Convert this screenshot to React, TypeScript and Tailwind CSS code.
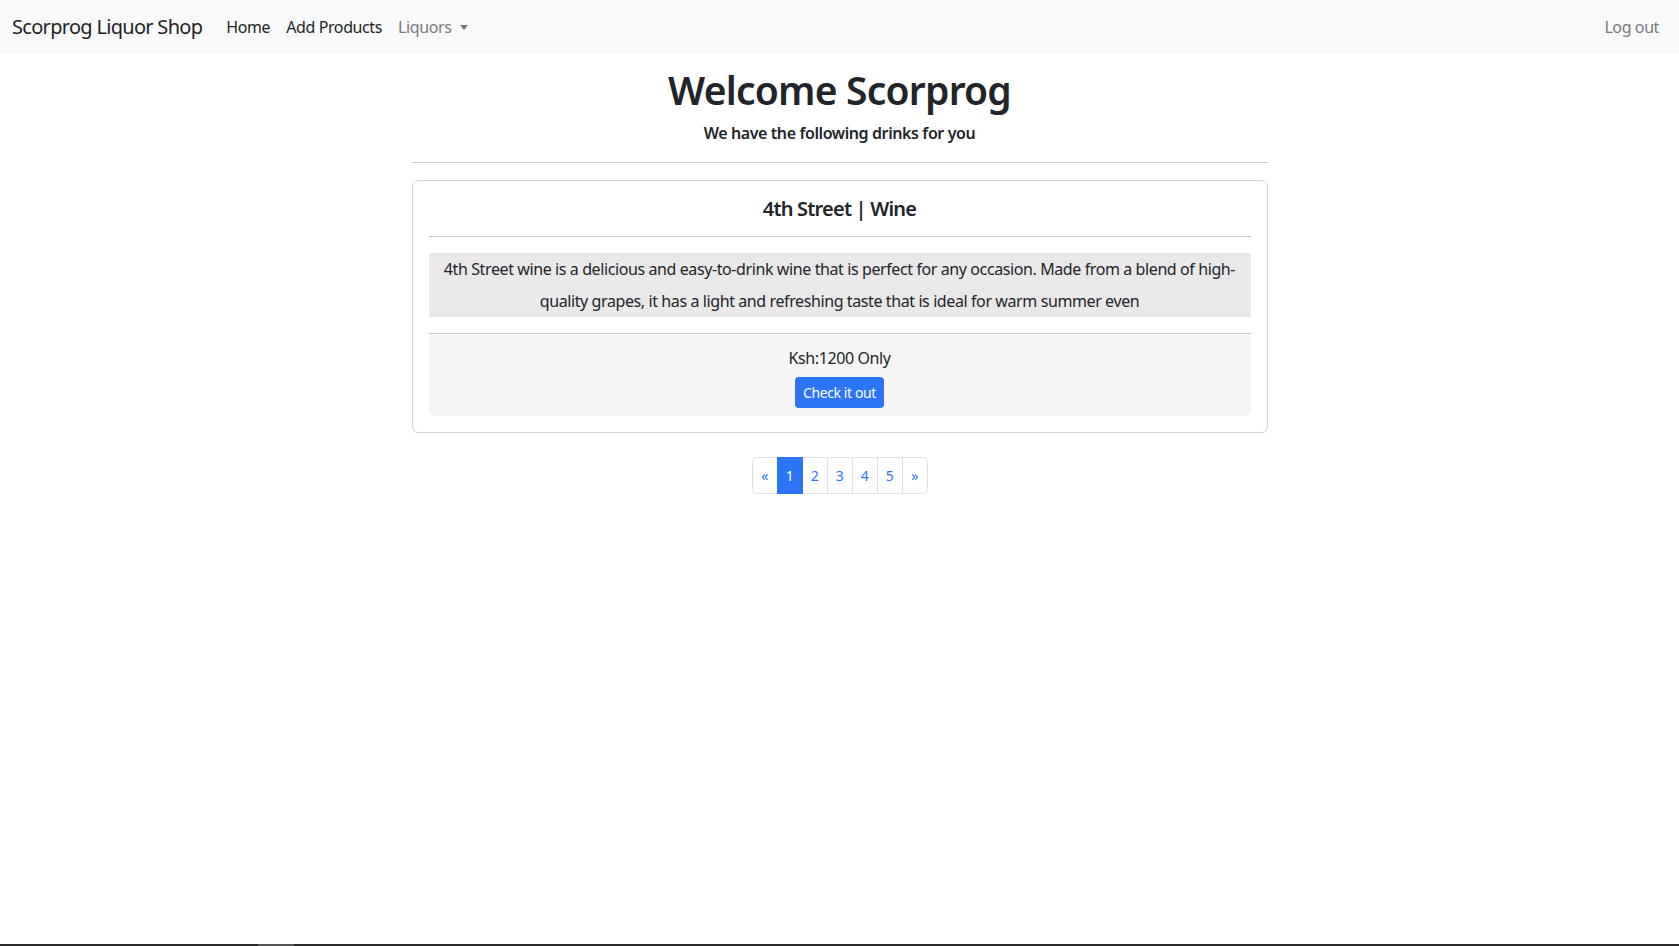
const font = { fontFamily: '"Segoe UI", "Noto Sans", "Liberation Sans", sans-serif' }

function Navbar() {
  return (
    <nav className="flex h-[54px] items-center bg-[#f8f9fa] px-3">
      <span className="mr-4 text-[20px] tracking-[-0.035em] text-[#1f1f1f]">Scorprog Liquor Shop</span>
      <div className="flex items-center text-[16px]">
        <a className="px-2 text-[#1f1f1f]">Home</a>
        <a className="px-2 text-[#1f1f1f]">Add Products</a>
        <a className="flex items-center px-2 text-[#7a7a7a]">
          Liquors
          <span className="ml-[9px] mt-[1px] h-0 w-0 border-x-[4px] border-t-[5px] border-x-transparent border-t-[#7a7a7a]" />
        </a>
      </div>
      <a className="ml-auto px-2 text-[16px] text-[#7a7a7a]">Log out</a>
    </nav>
  )
}

function ProductCard() {
  return (
    <div className="mt-[17px] rounded-[6px] border border-[#d6d6d6] p-4">
      <h5 className="text-center text-[20px] font-semibold leading-6 tracking-[-0.04em] text-[#212529]">4th Street | Wine</h5>
      <hr className="mt-[15px] border-[#c8c8c8]" />
      <p className="mt-4 bg-[#eae8e9] text-center text-[16px] leading-8 text-[#212529]">
        4th Street wine is a delicious and easy-to-drink wine that is perfect for any occasion. Made from a blend of high-quality grapes, it has a light and refreshing taste that is ideal for warm summer even
      </p>
      <div className="mt-4 flex flex-col items-center rounded-b-[6px] border-t border-[#c8c8c8] bg-[#f5f5f5] pb-2 pt-3">
        <span className="text-[16px] leading-6 text-[#212529]">Ksh:1200 Only</span>
        <button className="mt-[7px] h-[31px] rounded-[4px] bg-[#2c74f6] px-2 text-[14px] text-white">Check it out</button>
      </div>
    </div>
  )
}

function Pagination() {
  const items = ['«', '1', '2', '3', '4', '5', '»']
  return (
    <div className="mt-[24px] flex justify-center">
      {items.map((label, i) => (
        <span
          key={label}
          className={
            'flex h-[37px] w-[26px] items-center justify-center border text-[14px] ' +
            (i === 0 ? 'rounded-l-[5px] ' : '-ml-px ') +
            (i === items.length - 1 ? 'rounded-r-[5px] ' : '') +
            (label === '1'
              ? 'z-10 border-[#2c74f6] bg-[#2c74f6] text-white'
              : 'border-[#dee2e6] bg-white text-[#2c74f6]')
          }
        >
          {label}
        </span>
      ))}
    </div>
  )
}

export default function App() {
  return (
    <div className="flex h-[946px] flex-col bg-white tracking-[-0.025em]" style={font}>
      <Navbar />
      <main className="mx-auto flex w-[856px] flex-col">
        <h1 className="mt-[12px] text-center text-[39px] font-semibold leading-[48px] tracking-[-0.02em] text-[#212529]">Welcome Scorprog</h1>
        <p className="mt-[7px] text-center text-[16px] font-semibold leading-6 text-[#212529]">We have the following drinks for you</p>
        <hr className="mt-[17px] border-[#c8c8c8]" />
        <ProductCard />
        <Pagination />
      </main>
      <div className="mt-auto flex h-[2px] bg-[#2b2b2b]">
        <div className="ml-[258px] w-[36px] bg-[#555555]" />
      </div>
    </div>
  )
}
